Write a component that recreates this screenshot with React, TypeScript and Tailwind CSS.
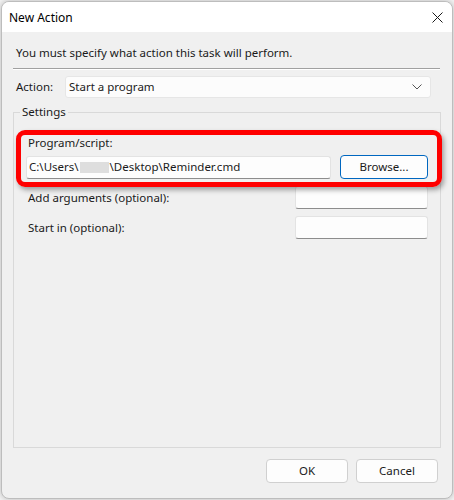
import React from "react";

const font = { fontFamily: '"Segoe UI", "Noto Sans", "Open Sans", sans-serif' };

function TextBox({ className = "", children }: { className?: string; children?: React.ReactNode }) {
  return (
    <div
      className={`h-[23px] bg-[#fdfdfd] border border-[#e3e3e3] border-b-[#8d8d8d] rounded-[3px] flex items-center px-[1px] text-[11.5px] text-[#1a1a1a] whitespace-nowrap overflow-hidden ${className}`}
    >
      {children}
    </div>
  );
}

function Btn({ className = "", children }: { className?: string; children: React.ReactNode }) {
  return (
    <div
      className={`h-[24px] bg-[#fdfdfd] border rounded-[4px] flex items-center justify-center text-[11.5px] text-[#1a1a1a] ${className}`}
    >
      {children}
    </div>
  );
}

export default function App() {
  return (
    <div className="w-[454px] h-[500px] bg-[#f4f4f4] overflow-hidden pt-[1px] pl-[1px]" style={font}>
      <div className="relative w-[452px] h-[498px] rounded-[8px] border border-[#bdbdbd] bg-[#f0f0f0] overflow-hidden shadow-[0_0_6px_rgba(0,0,0,0.25)]">
        {/* Title bar */}
        <div className="h-[30px] bg-white flex items-center justify-between pl-[7px] pr-[9px]">
          <span className="text-[12px] text-black leading-none mt-[1px]">New Action</span>
          <svg width="11" height="11" viewBox="0 0 11 11">
            <path d="M0.5 0.5 L10.5 10.5 M10.5 0.5 L0.5 10.5" stroke="#1a1a1a" strokeWidth="1" />
          </svg>
        </div>

        {/* Body */}
        <div className="pt-[13px]">
          <div className="pl-[14px] text-[11.5px] leading-[16px] text-[#1a1a1a]">
            You must specify what action this task will perform.
          </div>
          <div className="mt-[7px] ml-[11px] w-[427px] border-t border-t-[#a0a0a0] border-b border-b-white" />

          <div className="mt-[6px] flex items-center">
            <span className="pl-[14px] w-[63px] text-[11.5px] text-[#1a1a1a]">Action:</span>
            <div className="w-[366px] h-[22px] bg-[#fcfcfc] border border-[#e6e6e6] rounded-[3px] flex items-center justify-between pl-[3px] pr-[8px] text-[11.5px] text-[#1a1a1a]">
              <span>Start a program</span>
              <svg width="10" height="6" viewBox="0 0 10 6">
                <path d="M0.5 0.5 L5 5 L9.5 0.5" stroke="#555" strokeWidth="1" fill="none" />
              </svg>
            </div>
          </div>

          {/* Settings group */}
          <div className="relative mt-[14px] ml-[11px] w-[428px] h-[336px] border border-[#d9d9d9]">
            <span className="absolute left-[6px] top-[-9px] bg-[#f0f0f0] px-[2px] text-[11.5px] leading-[16px] text-[#1a1a1a]">
              Settings
            </span>
            <div className="pt-[22px] pl-[12px] pr-[12px]">
              <div className="pl-[2px] text-[11.5px] leading-[16px] text-[#1a1a1a]">Program/script:</div>
              <div className="mt-[4px] flex items-center justify-between">
                <TextBox className="w-[305px]">
                  <span className="pl-[1px]">C:\Users\</span>
                  <span className="inline-block w-[29px] h-[11px] bg-[#dedede] mx-[1px]" />
                  <span>\Desktop\Reminder.cmd</span>
                </TextBox>
                <Btn className="w-[88px] border-[#0067c0]">Browse...</Btn>
              </div>
              <div className="mt-[7px] flex items-center justify-between">
                <span className="pl-[2px] text-[11.5px] text-[#1a1a1a]">Add arguments (optional):</span>
                <TextBox className="w-[133px]" />
              </div>
              <div className="mt-[7px] flex items-center justify-between">
                <span className="pl-[2px] text-[11.5px] text-[#1a1a1a]">Start in (optional):</span>
                <TextBox className="w-[133px]" />
              </div>
            </div>
          </div>

          <div className="mt-[11px] flex justify-end gap-[8px] pr-[14px]">
            <Btn className="w-[82px] border-[#d0d0d0]">OK</Btn>
            <Btn className="w-[82px] border-[#d0d0d0]">Cancel</Btn>
          </div>
        </div>

        {/* Red highlight annotation */}
        <div className="absolute left-[14px] top-[128px] w-[426px] h-[57px] border-[5px] border-[#ff0000] rounded-[9px] shadow-[2px_3px_5px_rgba(0,0,0,0.35)] pointer-events-none" />
      </div>
    </div>
  );
}
